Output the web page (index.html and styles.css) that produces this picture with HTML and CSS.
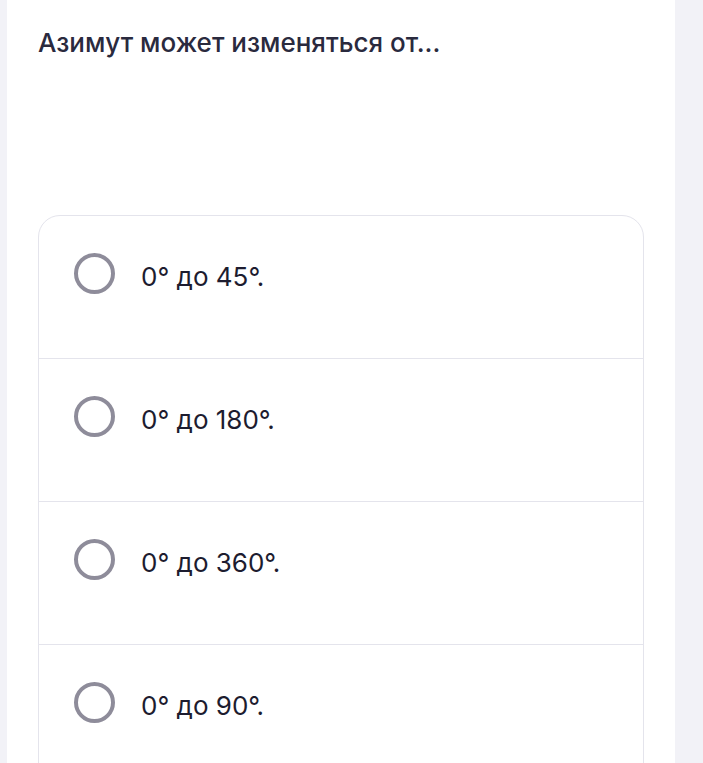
FILE: index.html
```html
<!DOCTYPE html>
<html lang="ru">
<head>
    <meta charset="UTF-8">
    <meta name="viewport" content="width=device-width, initial-scale=1.0">
    <title>Вопрос</title>
    <link rel="stylesheet" href="styles.css">
</head>
<body>
    <div class="pagina">
        <div class="pregunta">
            <h1>Азимут может изменяться от...</h1>

            <div class="opciones">
                <label class="opcion">
                    <span class="radio"></span>
                    <span class="texto">0° до 45°.</span>
                </label>
                <label class="opcion">
                    <span class="radio"></span>
                    <span class="texto">0° до 180°.</span>
                </label>
                <label class="opcion">
                    <span class="radio"></span>
                    <span class="texto">0° до 360°.</span>
                </label>
                <label class="opcion">
                    <span class="radio"></span>
                    <span class="texto">0° до 90°.</span>
                </label>
            </div>
        </div>
    </div>
</body>
</html>
```

FILE: styles.css
```css
body {
    font-family: Inter, "Noto Sans", sans-serif;
    margin: 0;
    padding: 0;
    background-color: #f2f2f7;
    overflow: hidden;
}

.pagina {
    margin-left: 7px;
    width: 668px;
    height: 763px;
    background-color: white;
    overflow: hidden;
}

.pregunta {
    padding: 0 31px 0 31px;
}

h1 {
    margin: 0;
    padding: 27px 0 0 0;
    font-size: 26px;
    font-weight: 500;
    color: #2a2a3e;
    height: 215px;
    box-sizing: border-box;
}

.opciones {
    border: 1.5px solid #e4e4ec;
    border-radius: 22px;
    overflow: hidden;
}

.opcion {
    display: flex;
    align-items: center;
    gap: 26px;
    padding: 36px 0 64px 35px;
    height: 42px;
    border-bottom: 1.5px solid #e4e4ec;
}

    .opcion:last-child {
        border-bottom: none;
        padding-bottom: 120px;
    }

.radio {
    width: 41px;
    height: 41px;
    box-sizing: border-box;
    border: 4px solid #8e8c9a;
    border-radius: 50%;
    flex-shrink: 0;
}

.texto {
    font-size: 26px;
    color: #1d1c2f;
    padding-top: 6px;
}
```
